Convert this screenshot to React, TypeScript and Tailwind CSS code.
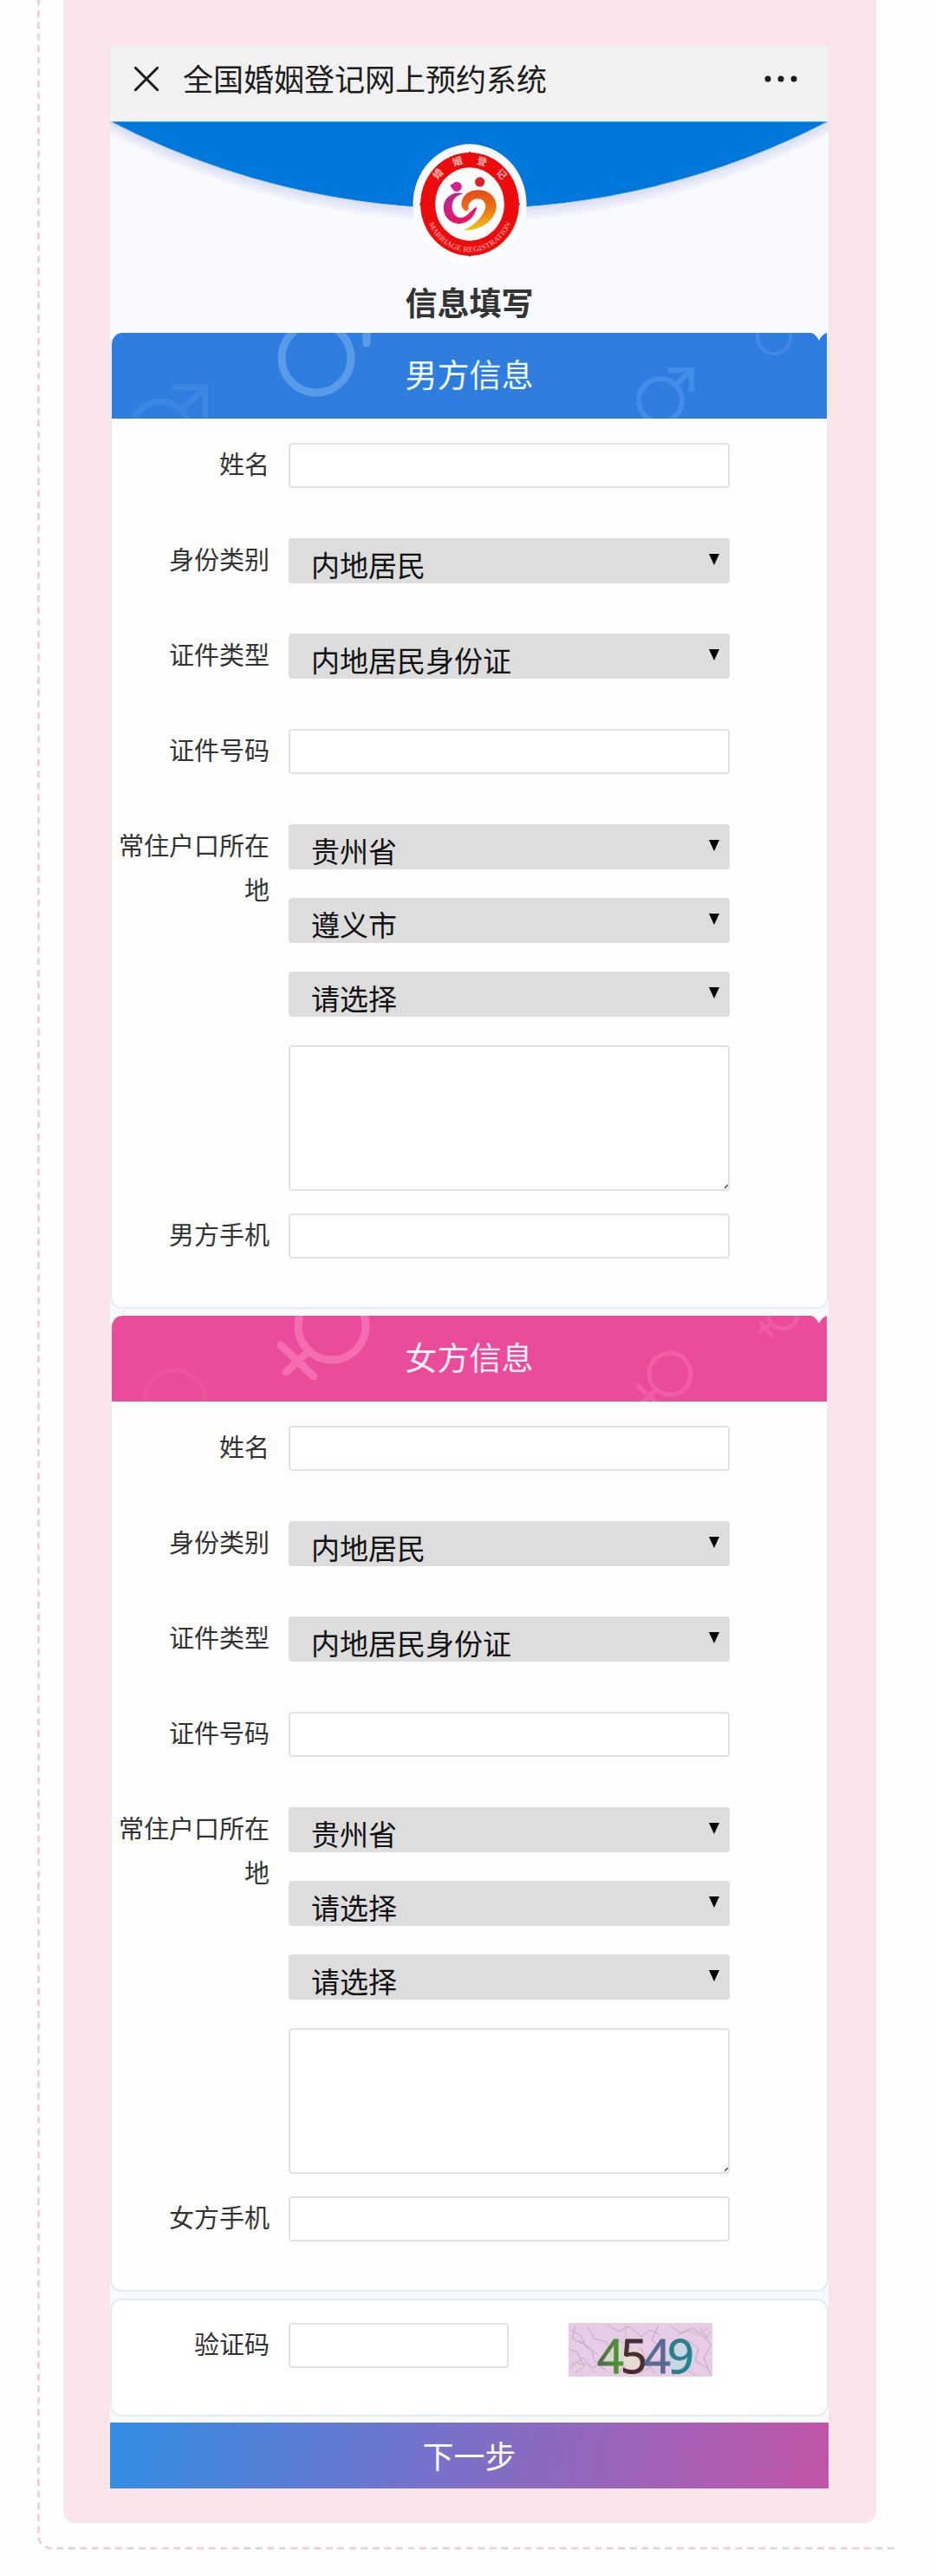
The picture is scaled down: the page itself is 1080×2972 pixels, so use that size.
import React from 'react';

type Person = {
  id: string;
  title: string;
  phoneLabel: string;
  city: string;
  bannerClass: string;
};

const people: Person[] = [
  { id: 'male', title: '男方信息', phoneLabel: '男方手机', city: '遵义市', bannerClass: 'bg-[#2e7ddf] text-[#f2fcff]' },
  { id: 'female', title: '女方信息', phoneLabel: '女方手机', city: '请选择', bannerClass: 'bg-[#ea4b9a] text-[#fff0fa]' },
];

const inputClass = 'block h-[52px] w-full rounded border-2 border-[#e2e2e2] bg-white px-4 text-[33px] outline-none';

function Emblem() {
  return (
    <svg viewBox="46 46 396 418" className="h-[139px] w-[132px]" role="img" aria-label="婚姻登记">
      <defs>
        <linearGradient id="heartLeft" x1="0" y1="0" x2="0.6" y2="1">
          <stop offset="0" stopColor="#b42a9c" />
          <stop offset="1" stopColor="#ec1560" />
        </linearGradient>
        <linearGradient id="heartRight" x1="0.4" y1="0" x2="0.5" y2="1">
          <stop offset="0" stopColor="#e5491c" />
          <stop offset="0.55" stopColor="#ea7a14" />
          <stop offset="1" stopColor="#f3c81c" />
        </linearGradient>
        <path id="arcTop" d="M106 255 A138 142 0 0 1 382 255" />
        <path id="arcBottom" d="M88 255 A156 166 0 0 0 400 255" />
      </defs>
      <ellipse cx="244" cy="255" rx="197" ry="208" fill="#fff" />
      <ellipse cx="244" cy="255" rx="171" ry="179" fill="#ec0b0d" />
      <ellipse cx="244" cy="255" rx="120" ry="127" fill="#fff" />
      <g fill="#c4161c">
        <circle cx="244" cy="78" r="5" />
        <circle cx="244" cy="432" r="5" />
        <circle cx="75" cy="255" r="5" />
        <circle cx="413" cy="255" r="5" />
      </g>
      <g fill="#ffb3ad" fontFamily="'Noto Sans CJK SC', sans-serif" fontWeight="700" fontSize="34" textAnchor="middle">
        <text><textPath href="#arcTop" startOffset="24%">婚</textPath></text>
        <text><textPath href="#arcTop" startOffset="41%">姻</textPath></text>
        <text><textPath href="#arcTop" startOffset="59%">登</textPath></text>
        <text><textPath href="#arcTop" startOffset="76%">记</textPath></text>
      </g>
      <text fill="#ff8a84" fontFamily="'Liberation Serif', serif" fontWeight="700" fontSize="27" textAnchor="middle">
        <textPath href="#arcBottom" startOffset="50%">MARRIAGE REGISTRATION</textPath>
      </text>
      <path d="M176 190 Q178 186 186 184 A17 17 0 1 1 184 202 Z" fill="#d5218f" />
      <circle cx="279" cy="178" r="17" fill="#d8232a" />
      <path
        d="M222 219 C187 206 151 234 153 270 C156 308 188 328 217 322 C247 314 264 292 269 264 C250 272 241 296 216 302 C193 304 178 279 184 252 C189 232 205 222 222 219Z"
        fill="url(#heartLeft)"
      />
      <path
        d="M216 262 C212 225 240 204 280 206 C315 208 340 235 336 270 C328 317 280 347 222 346 C265 325 292 297 299 265 C300 240 275 230 256 240 C243 248 236 258 241 270 C234 286 221 279 216 262Z"
        fill="url(#heartRight)"
      />
    </svg>
  );
}

function MalePattern() {
  return (
    <svg viewBox="0 0 825 99" preserveAspectRatio="xMidYMid slice" className="absolute inset-0 h-full w-full" fill="none" aria-hidden="true">
      <g stroke="#589be9" strokeWidth="9" strokeLinecap="round">
        <circle cx="236" cy="29" r="40" />
        <path d="M294 -20V12" />
      </g>
      <g stroke="#3b87e3" strokeWidth="7">
        <circle cx="56" cy="112" r="33" />
        <path d="M80 88L106 66M70 63H108V99" />
      </g>
      <g stroke="#438de8" strokeWidth="6">
        <circle cx="633" cy="78" r="25" />
        <path d="M651 60L668 44M642 43H669V68" />
      </g>
      <circle cx="764" cy="5" r="19" stroke="#4389e3" strokeWidth="4" />
      <path d="M807 0Q813 2 816 9Q819 2 825 0Z" fill="#fff" />
    </svg>
  );
}

function FemalePattern() {
  return (
    <svg viewBox="0 0 825 99" preserveAspectRatio="xMidYMid slice" className="absolute inset-0 h-full w-full" fill="none" aria-hidden="true">
      <g stroke="#f56db1" strokeWidth="9" strokeLinecap="round">
        <circle cx="254" cy="12" r="39" />
        <path d="M195 34L233 70M201 65L226 42" />
      </g>
      <circle cx="73" cy="98" r="35" stroke="#ee539e" strokeWidth="5" />
      <g stroke="#f25ea6" strokeWidth="5">
        <circle cx="644" cy="67" r="24" />
        <path d="M606 80L630 101M611 102L627 86" />
      </g>
      <g stroke="#ef5ba5" strokeWidth="5">
        <circle cx="774" cy="-2" r="17" />
        <path d="M748 7L763 24M747 19L761 9" />
      </g>
      <path d="M807 0Q813 2 816 9Q819 2 825 0Z" fill="#fff" />
    </svg>
  );
}

function Captcha() {
  return (
    <svg viewBox="0 0 166 62" className="h-[62px] w-[166px] shrink-0 overflow-visible" role="img" aria-label="4549">
      <defs>
        <linearGradient id="digitGreen" x1="0" y1="0" x2="1" y2="0">
          <stop offset="0" stopColor="#566a4c" />
          <stop offset="1" stopColor="#4f9a36" />
        </linearGradient>
      </defs>
      <rect width="166" height="62" fill="#e6cce5" />
      <g fill="none" stroke="#c9a4c3" strokeWidth="1">
        <path d="M2 8L14 14L20 28L34 36M0 30L10 34L18 50L8 58M22 4L30 18L44 22L50 38M12 20L26 30L30 44L44 56" />
        <path d="M44 2L58 10L70 4L84 16L94 8L106 14M60 30L72 36L84 30L90 46L100 58M104 2L96 20L110 30L104 48" />
        <path d="M118 4L130 12L144 6L158 18L164 10M138 20L150 30L146 44L160 52M152 6L164 26L156 40L164 60" />
        <path d="M2 52L16 40L28 52L40 44M54 60L66 50L82 58L96 50M120 60L132 52L146 60M8 4L4 18L16 24" />
      </g>
      <g fill="none" stroke="#bdc3a6" strokeWidth="1">
        <path d="M66 2V16M58 20L72 28L80 42M4 46L22 48L30 58M126 14L136 8L150 14L160 6" />
      </g>
      <ellipse cx="55" cy="38" rx="12" ry="16" fill="#d3e3bf" opacity="0.6" />
      <ellipse cx="76" cy="44" rx="12" ry="14" fill="#ece4c4" opacity="0.6" />
      <ellipse cx="130" cy="38" rx="16" ry="20" fill="#bcdbe6" opacity="0.7" />
      <g fontFamily="'Open Sans', sans-serif" fontSize="54" strokeWidth="1">
        <text x="33" y="58" fill="url(#digitGreen)" stroke="url(#digitGreen)">4</text>
        <text x="60" y="58" fill="#4a2d33" stroke="#4a2d33">5</text>
        <text x="87" y="58" fill="#5b6a92" stroke="#5b6a92">4</text>
        <text x="114" y="58" fill="#2c7f8c" stroke="#2c7f8c">9</text>
      </g>
    </svg>
  );
}

function Row({ label, htmlFor, children }: { label: string; htmlFor: string; children: React.ReactNode }) {
  return (
    <div className="flex">
      <label htmlFor={htmlFor} className="-mt-0.5 w-[204px] shrink-0 pl-1 pr-[22px] text-right text-[29px] leading-[51px]">
        {label}
      </label>
      <div className="min-w-0 flex-1">{children}</div>
    </div>
  );
}

function SelectBox({ id, value, label }: { id: string; value: string; label?: string }) {
  return (
    <div className="relative">
      <select
        id={id}
        aria-label={label}
        className="block h-[52px] w-full appearance-none rounded bg-[#dddddd] pl-[26px] pr-12 pt-[7px] text-[33px] leading-[44px] text-[#111] outline-none"
      >
        <option>{value}</option>
      </select>
      <svg viewBox="0 0 12 13" className="pointer-events-none absolute right-3 top-[18px] h-[13px] w-3" aria-hidden="true">
        <path d="M0 0H12L6 13Z" fill="#000" />
      </svg>
    </div>
  );
}

function PersonCard({ person }: { person: Person }) {
  const { id, title, phoneLabel, city, bannerClass } = person;
  return (
    <section className="overflow-hidden rounded-b-[14px] rounded-tl-[14px] border-x-2 border-b-2 border-[#e4ecef] bg-[#fefefe]">
      <div className={`relative flex h-[99px] items-center justify-center pb-1 ${bannerClass}`}>
        {id === 'male' ? <MalePattern /> : <FemalePattern />}
        <h2 className="relative text-[37px]">{title}</h2>
      </div>
      <div className="flex flex-col pb-[56px] pr-[112px] pt-7">
        <div className="flex flex-col gap-[58px]">
          <Row label="姓名" htmlFor={`${id}-name`}>
            <input id={`${id}-name`} type="text" className={inputClass} />
          </Row>
          <Row label="身份类别" htmlFor={`${id}-kind`}>
            <SelectBox id={`${id}-kind`} value="内地居民" />
          </Row>
          <Row label="证件类型" htmlFor={`${id}-cert`}>
            <SelectBox id={`${id}-cert`} value="内地居民身份证" />
          </Row>
          <Row label="证件号码" htmlFor={`${id}-number`}>
            <input id={`${id}-number`} type="text" className={inputClass} />
          </Row>
          <Row label="常住户口所在地" htmlFor={`${id}-province`}>
            <div className="flex flex-col gap-[33px]">
              <SelectBox id={`${id}-province`} value="贵州省" />
              <SelectBox id={`${id}-city`} value={city} label="市" />
              <SelectBox id={`${id}-district`} value="请选择" label="区县" />
              <div className="relative">
                <textarea
                  aria-label="详细地址"
                  className="block h-[168px] w-full resize-none rounded border-2 border-[#e2e2e2] bg-white p-4 text-[29px] outline-none"
                />
                <svg viewBox="0 0 4 4" className="pointer-events-none absolute bottom-[3px] right-0.5 h-1 w-1" aria-hidden="true">
                  <path d="M0 4L4 0" stroke="#444" strokeWidth="1.5" />
                </svg>
              </div>
            </div>
          </Row>
        </div>
        <div className="mt-[26px]">
          <Row label={phoneLabel} htmlFor={`${id}-phone`}>
            <input id={`${id}-phone`} type="tel" className={inputClass} />
          </Row>
        </div>
      </div>
    </section>
  );
}

function App() {
  return (
    <div className="bg-[#fefefe] pb-[30px] pl-[43px] pr-11 font-['Noto_Sans_CJK_SC',sans-serif] text-[#333]">
      <div className="relative pb-[31px] pl-[30px] pr-[25px]">
        {/* Dashed outline, open at the top and on the right */}
        <svg className="pointer-events-none absolute inset-0 h-full w-full" fill="none" aria-hidden="true">
          <rect
            x="1.5"
            y="-20"
            width="110%"
            rx="14"
            className="h-[calc(100%+18px)]"
            stroke="#eacdd4"
            strokeWidth="2.5"
            strokeDasharray="8 5.5"
          />
        </svg>
        <div className="relative rounded-b-[14px] bg-[#fbe5eb] pb-10 pl-[54px] pr-[55px] pt-[53px]">
          <main className="bg-[#f9fafe]">
            <header className="flex h-[87px] items-center bg-[#f2f1f1] pb-3 pl-7 pr-9 text-[#1c1c1c]">
              <button type="button" aria-label="关闭">
                <svg viewBox="0 0 28 28" className="h-7 w-7" stroke="currentColor" strokeWidth="3" strokeLinecap="round">
                  <path d="M1 1L27 27M27 1L1 27" />
                </svg>
              </button>
              <h1 className="ml-7 text-[35px]">全国婚姻登记网上预约系统</h1>
              <button type="button" aria-label="更多" className="ml-auto">
                <svg viewBox="0 0 38 8" className="h-2 w-[38px]" fill="currentColor">
                  <circle cx="4" cy="4" r="3.5" />
                  <circle cx="19" cy="4" r="3.5" />
                  <circle cx="34" cy="4" r="3.5" />
                </svg>
              </button>
            </header>

            {/* Blue arc behind the emblem */}
            <div className="relative flex flex-col items-center pb-3 pt-[26px]">
              <svg viewBox="0 0 828 120" preserveAspectRatio="none" className="absolute inset-x-0 top-0 h-[120px] w-full" aria-hidden="true">
                <g fill="#d9daf2">
                  <path d="M0 0V14A899 899 0 0 0 828 14V0Z" opacity="0.25" />
                  <path d="M0 0V10A899 899 0 0 0 828 10V0Z" opacity="0.35" />
                  <path d="M0 0V5A899 899 0 0 0 828 5V0Z" opacity="0.6" />
                </g>
                <path d="M0 0A899 899 0 0 0 828 0Z" fill="#0077db" stroke="#a9cdf8" strokeWidth="1" />
              </svg>
              <div className="relative">
                <Emblem />
              </div>
              <p className="mt-[19px] text-[37px] font-bold leading-[48px]">信息填写</p>
            </div>

            <form onSubmit={(e) => e.preventDefault()}>
              <div className="flex flex-col gap-2">
                {people.map((person) => (
                  <PersonCard key={person.id} person={person} />
                ))}
                <section className="flex rounded-[14px] border-2 border-[#e4ecef] bg-white pb-11 pt-[26px]">
                  <label htmlFor="captcha" className="-mt-0.5 w-[204px] shrink-0 pr-[22px] text-right text-[29px] leading-[51px]">
                    验证码
                  </label>
                  <div className="w-[254px]">
                    <input id="captcha" type="text" className={inputClass} />
                  </div>
                  <div className="ml-[69px]">
                    <Captcha />
                  </div>
                </section>
              </div>
              <button
                type="submit"
                className="mt-[7px] block h-[76px] w-full bg-[linear-gradient(100deg,#318de4_0%,#7b70c9_48%,#c255a6_100%)] pb-0.5 text-[36px] text-white"
              >
                下一步
              </button>
            </form>
          </main>
        </div>
      </div>
    </div>
  );
}

export default App;
